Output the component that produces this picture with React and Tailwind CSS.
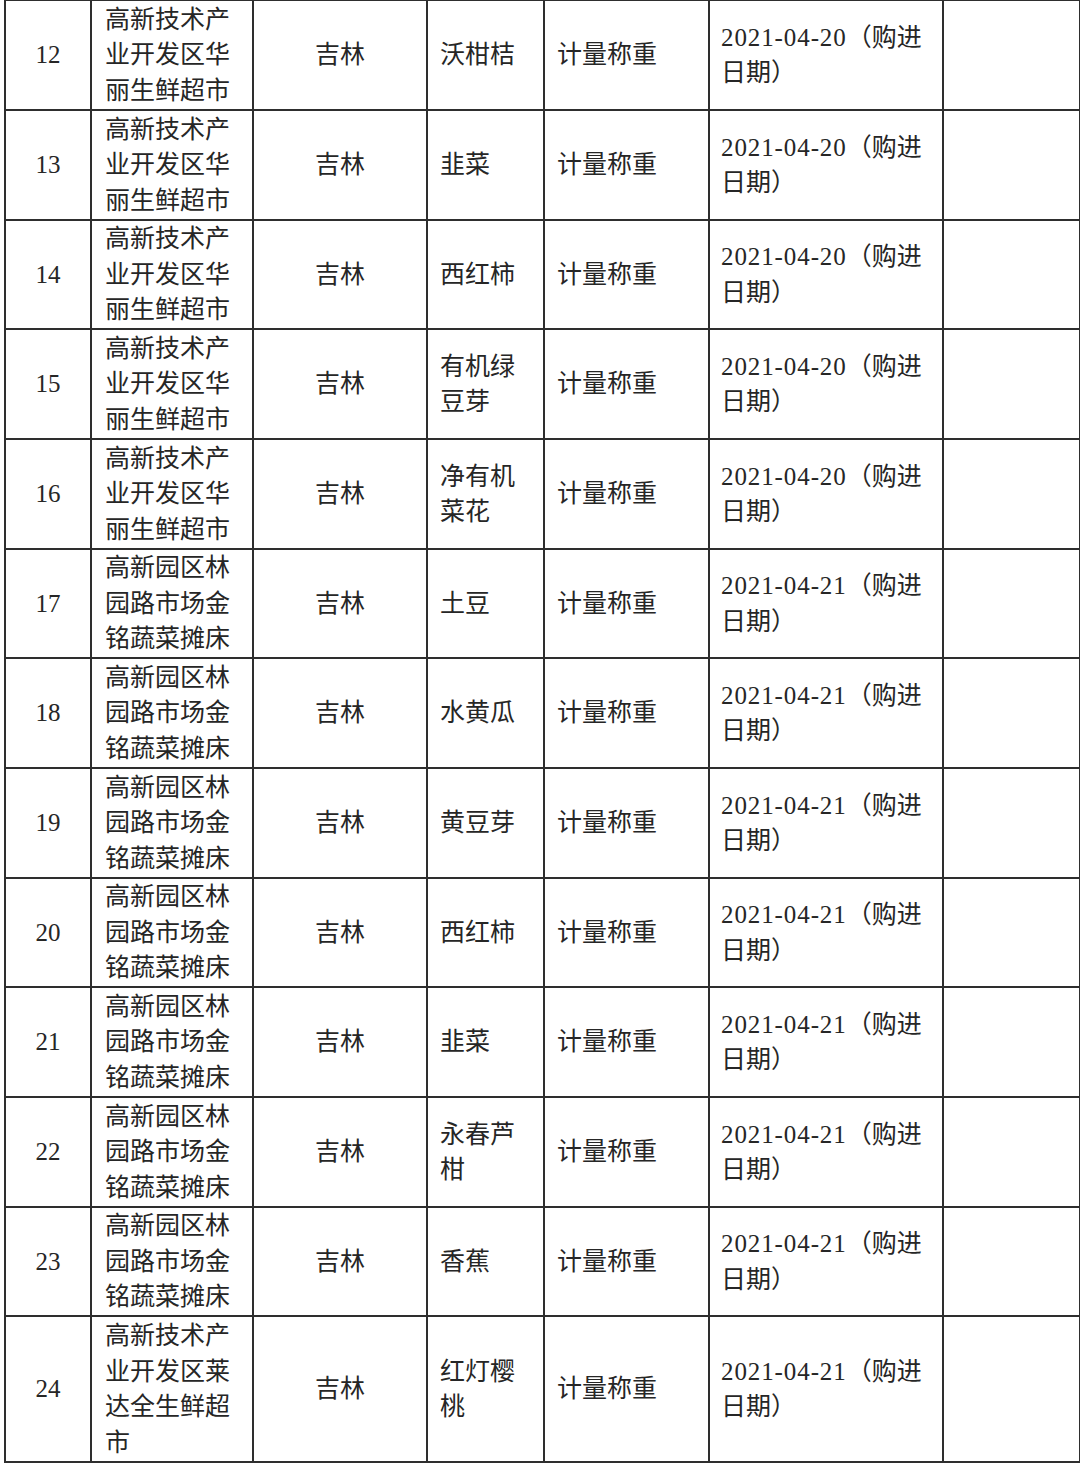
import React from 'react';

const rows = [
  { no: 12, shop: '高新技术产业开发区华丽生鲜超市', item: '沃柑桔', date: '2021-04-20' },
  { no: 13, shop: '高新技术产业开发区华丽生鲜超市', item: '韭菜', date: '2021-04-20' },
  { no: 14, shop: '高新技术产业开发区华丽生鲜超市', item: '西红柿', date: '2021-04-20' },
  { no: 15, shop: '高新技术产业开发区华丽生鲜超市', item: '有机绿豆芽', date: '2021-04-20' },
  { no: 16, shop: '高新技术产业开发区华丽生鲜超市', item: '净有机菜花', date: '2021-04-20' },
  { no: 17, shop: '高新园区林园路市场金铭蔬菜摊床', item: '土豆', date: '2021-04-21' },
  { no: 18, shop: '高新园区林园路市场金铭蔬菜摊床', item: '水黄瓜', date: '2021-04-21' },
  { no: 19, shop: '高新园区林园路市场金铭蔬菜摊床', item: '黄豆芽', date: '2021-04-21' },
  { no: 20, shop: '高新园区林园路市场金铭蔬菜摊床', item: '西红柿', date: '2021-04-21' },
  { no: 21, shop: '高新园区林园路市场金铭蔬菜摊床', item: '韭菜', date: '2021-04-21' },
  { no: 22, shop: '高新园区林园路市场金铭蔬菜摊床', item: '永春芦柑', date: '2021-04-21' },
  { no: 23, shop: '高新园区林园路市场金铭蔬菜摊床', item: '香蕉', date: '2021-04-21' },
  { no: 24, shop: '高新技术产业开发区莱达全生鲜超市', item: '红灯樱桃', date: '2021-04-21' },
];

const cell = 'border-2 border-[#2e2e2e] align-middle';

// 12 rows share 1316px in the source, the last one is taller
const rowHeight = (i) => {
  if (i === rows.length - 1) return 'h-[146px]';
  return i % 3 === 2 ? 'h-[109px]' : 'h-[110px]';
};

export default function App() {
  return (
    <div className="w-[1080px] h-[1467px] bg-white overflow-hidden">
      <table
        className="table-fixed border-collapse ml-[4px] -mt-[1px] text-[25px] leading-[35.5px] text-[#262626]"
        style={{ fontFamily: '"Liberation Serif", "Noto Sans CJK SC", serif', width: 1075 }}
      >
        <colgroup>
          <col className="w-[86px]" />
          <col className="w-[162px]" />
          <col className="w-[174px]" />
          <col className="w-[117px]" />
          <col className="w-[165px]" />
          <col className="w-[234px]" />
          <col className="w-[137px]" />
        </colgroup>
        <tbody>
          {rows.map((r, i) => (
            <tr key={r.no} className={rowHeight(i)}>
              <td className={`${cell} text-center`}>{r.no}</td>
              <td className={`${cell} pl-[13px] pr-[14px] break-all`}>{r.shop}</td>
              <td className={`${cell} text-center`}>吉林</td>
              <td className={`${cell} pl-[12px] pr-[14px] break-all`}>{r.item}</td>
              <td className={`${cell} pl-[12px]`}>计量称重</td>
              <td className={`${cell} pl-[11px]`}>
                <span className="whitespace-nowrap">
                  <span className="tracking-[0.9px]">{r.date}</span>（购进
                </span>
                <br />
                日期）
              </td>
              <td className={cell}></td>
            </tr>
          ))}
        </tbody>
      </table>
    </div>
  );
}
